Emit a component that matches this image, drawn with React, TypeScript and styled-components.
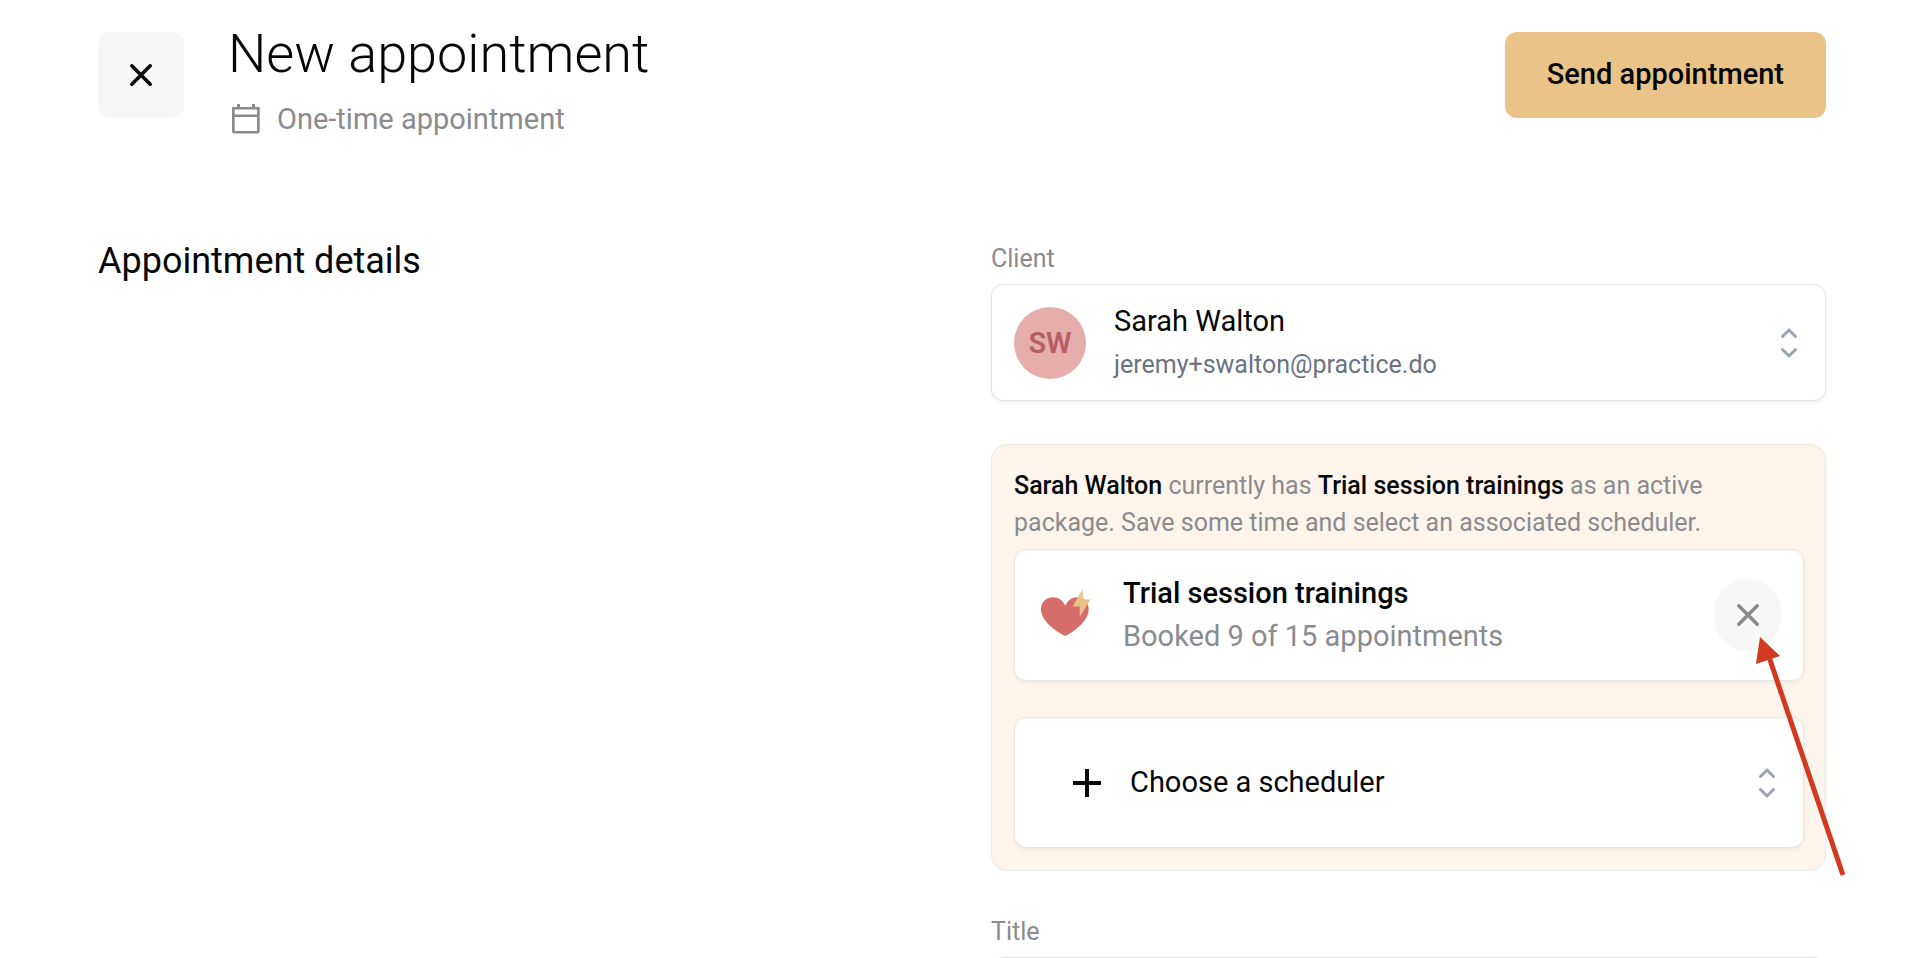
import React, { useState } from "react";
import styled, { createGlobalStyle } from "styled-components";

const GlobalStyle = createGlobalStyle`
  *, *::before, *::after { box-sizing: border-box; }
  body { margin: 0; background: #fff; }
  body, button, input, select { font-family: Roboto, "Liberation Sans", sans-serif; }
  h1, h2, p { margin: 0; }
`;

const ink = "#050707";
const muted = "#8b8b8f";
const line = "#e5e5e5";

const Page = styled.main`
  position: relative;
  height: 100vh;
  overflow: hidden auto;
  scrollbar-width: none;
  padding: 32px 102px 48px 98px;
  color: ${ink};
  font-size: 29px;
  line-height: 40px;
`;

const Header = styled.header`
  display: flex;
  align-items: flex-start;
  margin-bottom: 100px;
`;

const CloseButton = styled.button`
  display: grid;
  place-items: center;
  width: 86px;
  height: 86px;
  padding: 0;
  border: 0;
  border-radius: 12px;
  background: #f7f7f7;
  color: ${ink};
`;

const Heading = styled.div`
  flex: 1;
  margin-left: 44px;
`;

const PageTitle = styled.h1`
  font-size: 54px;
  font-weight: 300;
  line-height: 64px;
  margin-top: -10px;
`;

const Subtitle = styled.p`
  display: flex;
  align-items: center;
  gap: 15px;
  margin-top: 11px;
  color: ${muted};
  line-height: 44px;
`;

const SendButton = styled.button`
  height: 86px;
  padding: 0 42px 2px;
  border: 0;
  border-radius: 12px;
  background: #e9c387;
  color: ${ink};
  font-size: 29px;
  font-weight: 500;
`;

const Columns = styled.div`
  display: grid;
  grid-template-columns: 1fr 1fr;
  column-gap: 58px;
`;

const SectionTitle = styled.h2`
  font-size: 36px;
  font-weight: 400;
  line-height: 40px;
`;

const Form = styled.form`
  display: flex;
  flex-direction: column;
  gap: 43px;
`;

const Field = styled.div`
  display: flex;
  flex-direction: column;
  gap: 8px;
`;

const Label = styled.label`
  color: ${muted};
  font-size: 25px;
  line-height: 35px;
`;

const Card = styled.div`
  display: flex;
  align-items: center;
  width: 100%;
  border: 1px solid ${line};
  border-radius: 12px;
  background: #fff;
  box-shadow: 0 2px 4px rgba(0, 0, 0, 0.05);
  text-align: left;
  color: ${ink};
`;

const ClientPicker = styled(Card).attrs({ as: "button" })`
  height: 117px;
  padding: 0 16px 0 22px;
`;

const Avatar = styled.span`
  display: grid;
  place-items: center;
  width: 72px;
  height: 72px;
  margin-right: 28px;
  border-radius: 50%;
  background: #e6adad;
  color: #b85c65;
  font-size: 29px;
  font-weight: 600;
`;

const Lines = styled.span`
  display: flex;
  flex: 1;
  flex-direction: column;
  font-size: 29px;
  line-height: 43px;
`;

const Email = styled.span`
  color: #6b7280;
  font-size: 25px;
`;

const PackageName = styled.strong`
  font-weight: 500;
`;

const Booked = styled.span`
  color: ${muted};
`;

const PackagePanel = styled.section`
  display: flex;
  flex-direction: column;
  padding: 22px 21px 22px 22px;
  border: 1px solid #ece9df;
  border-radius: 16px;
  background: #fdf5eb;
`;

const PackageNote = styled.p`
  margin-bottom: 8px;
  color: ${muted};
  font-size: 25px;
  line-height: 37px;

  strong {
    color: ${ink};
    font-weight: 500;
  }
`;

const PackageCard = styled(Card)`
  height: 132px;
  margin-bottom: 36px;
  padding: 0 22px 0 26px;

  > svg { margin: 0 32px 4px 0; }
`;

const RemoveButton = styled.button`
  display: grid;
  place-items: center;
  width: 67px;
  height: 72px;
  padding: 0;
  border: 0;
  border-radius: 36px;
  background: #f7f7f7;
  color: ${muted};
`;

const SchedulerCard = styled(Card)`
  position: relative;

  > svg {
    position: absolute;
    pointer-events: none;
  }
  > svg:first-of-type { left: 57px; }
  > svg:last-of-type { right: 16px; }
`;

const SchedulerSelect = styled.select`
  appearance: none;
  width: 100%;
  height: 129px;
  padding: 0 64px 1px 115px;
  border: 0;
  border-radius: 12px;
  background: transparent;
  color: ${ink};
  font-size: 29px;
`;

const TitleInput = styled.input`
  height: 86px;
  padding: 0 22px;
  border: 1px solid ${line};
  border-radius: 12px;
  font-size: 29px;
`;

const Pointer = styled.svg`
  position: absolute;
  top: 632px;
  right: 80px;
  pointer-events: none;
`;

const Selector = () => (
  <svg width="40" height="40" viewBox="0 0 40 40" fill="none" stroke="#9ca3af" strokeWidth="3" strokeLinecap="round" aria-hidden="true">
    <path d="M13.500 13.500L20 7l6.500 6.500M13.500 26.500L20 33l6.500-6.500" />
  </svg>
);

const Cross = () => (
  <svg width="24" height="24" viewBox="0 0 24 24" fill="none" stroke="currentColor" strokeWidth="3.6" strokeLinecap="round" aria-hidden="true">
    <path d="M2.800 2.800L21.200 21.200M21.200 2.800L2.800 21.200" />
  </svg>
);

const Calendar = () => (
  <svg width="34" height="32" viewBox="0 0 34 32" aria-hidden="true">
    <path fill="currentColor" fillRule="evenodd" d="M9 1h3v3h12V1h3v3h4.700v24.500a2 2 0 01-2 2H6a2 2 0 01-2-2V4h5zM6.700 6.500v5H29v-5zM6.700 14v14H29V14z" />
  </svg>
);

const HeartBolt = () => (
  <svg width="50" height="48" viewBox="0 0 50 48" aria-hidden="true">
    <path fill="#d66d6a" d="M24.300 47C16 43.500 0 32 0 20.500C0 13.500 5 8.300 11.700 8.300C17.500 8.300 22 11.500 24.300 17C26.500 11.500 31 8.300 36.500 8.300C43 8.300 47.700 13.500 47.700 20.500C47.700 32 32 43.500 24.300 47Z" />
    <path fill="#e9c387" d="M41.700 0L31.600 17.600H38.700V28L49.500 10.500H42Z" />
  </svg>
);

const Plus = () => (
  <svg width="30" height="30" viewBox="0 0 30 30" fill="none" stroke="currentColor" strokeWidth="4" aria-hidden="true">
    <path d="M15 1v28M1 15h28" />
  </svg>
);

export default function App() {
  const [title, setTitle] = useState("");
  return (
    <>
      <GlobalStyle />
      <Page>
        <Header>
          <CloseButton type="button" aria-label="Close"><Cross /></CloseButton>
          <Heading>
            <PageTitle>New appointment</PageTitle>
            <Subtitle><Calendar />One-time appointment</Subtitle>
          </Heading>
          <SendButton type="submit" form="appointment">Send appointment</SendButton>
        </Header>
        <Columns>
          <SectionTitle>Appointment details</SectionTitle>
          <Form id="appointment">
            <Field>
              <Label htmlFor="client">Client</Label>
              <ClientPicker id="client" type="button" aria-haspopup="listbox">
                <Avatar>SW</Avatar>
                <Lines>
                  <span>Sarah Walton</span>
                  <Email>jeremy+swalton@practice.do</Email>
                </Lines>
                <Selector />
              </ClientPicker>
            </Field>
            <PackagePanel>
              <PackageNote>
                <strong>Sarah Walton</strong> currently has <strong>Trial session trainings</strong> as an active
                package. Save some time and select an associated scheduler.
              </PackageNote>
              <PackageCard>
                <HeartBolt />
                <Lines>
                  <PackageName>Trial session trainings</PackageName>
                  <Booked>Booked 9 of 15 appointments</Booked>
                </Lines>
                <RemoveButton type="button" aria-label="Remove package"><Cross /></RemoveButton>
              </PackageCard>
              <SchedulerCard>
                <Plus />
                <SchedulerSelect aria-label="Scheduler">
                  <option>Choose a scheduler</option>
                </SchedulerSelect>
                <Selector />
              </SchedulerCard>
            </PackagePanel>
            <Field>
              <Label htmlFor="title">Title</Label>
              <TitleInput id="title" value={title} onChange={(e) => setTitle(e.target.value)} />
            </Field>
          </Form>
        </Columns>
        <Pointer width="96" height="248" viewBox="0 0 96 248" aria-hidden="true">
          <path d="M16 22L91 243" stroke="#d13a20" strokeWidth="5" />
          <path d="M8 5L28 24L4 32Z" fill="#d13a20" />
        </Pointer>
      </Page>
    </>
  );
}
